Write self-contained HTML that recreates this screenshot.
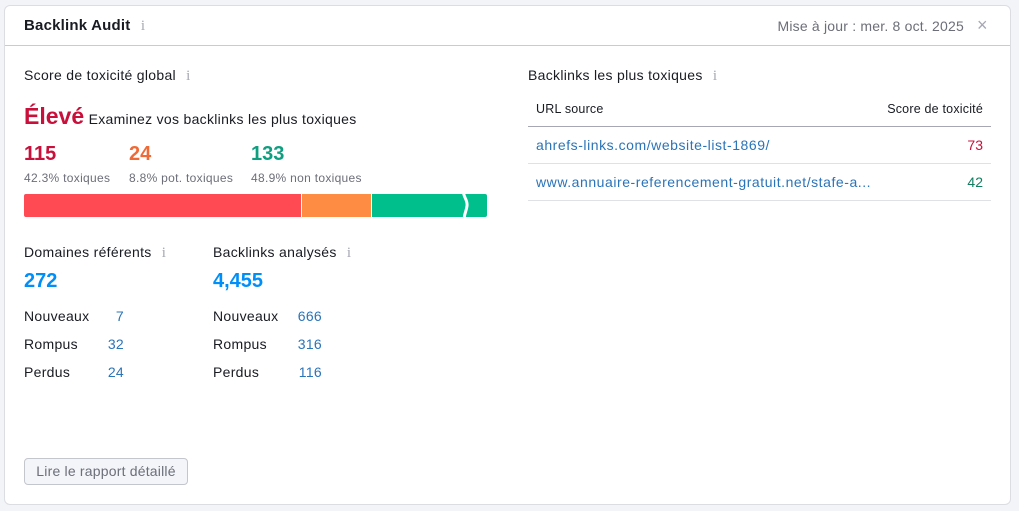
<!DOCTYPE html>
<html><head><meta charset="utf-8"><style>
*{margin:0;padding:0;box-sizing:border-box}
body{width:1019px;height:511px;background:#f3f4f8;font-family:"Liberation Sans",sans-serif;color:#191b23;position:relative;overflow:hidden}
.card{position:absolute;left:4px;top:5px;width:1007px;height:500px;background:#fff;border:1px solid #dcdde3;border-radius:6px}
.a{position:absolute;white-space:nowrap}
.i{color:#a5a8b3;font-family:"Liberation Serif",serif;font-size:15px}
.blue{color:#2a74b8}
.big{font-weight:bold;font-size:20px}
.t{font-size:14px;letter-spacing:0.3px}
</style></head><body>
<div class="card"></div>
<div class="a" style="left:24px;top:17px;font-size:15px;font-weight:bold;letter-spacing:0.2px">Backlink Audit <span class="i" style="margin-left:6px;font-weight:normal">i</span></div>
<div class="a" style="right:55px;top:18px;font-size:14px;color:#6c6e79;letter-spacing:0.2px">Mise à jour : mer. 8 oct. 2025</div>
<div class="a" style="left:977px;top:15px;font-size:18px;color:#a5a8b3">×</div>
<div class="a" style="left:5px;top:45px;width:1005px;height:1px;background:#c9cbd2"></div>

<div class="a t" style="left:24px;top:67px">Score de toxicité global <span class="i" style="margin-left:6px">i</span></div>
<div class="a" style="left:24px;top:103px"><span style="color:#c8103b;font-weight:bold;font-size:23px">Élevé</span> <span class="t">Examinez vos backlinks les plus toxiques</span></div>
<div class="a big" style="left:24px;top:143px;color:#c8103b">115</div>
<div class="a big" style="left:129px;top:143px;color:#f06a37">24</div>
<div class="a big" style="left:251px;top:143px;color:#0e9e80">133</div>
<div class="a" style="left:24px;top:171px;font-size:12px;color:#6c6e79;letter-spacing:0.3px">42.3% toxiques</div>
<div class="a" style="left:129px;top:171px;font-size:12px;color:#6c6e79;letter-spacing:0.3px">8.8% pot. toxiques</div>
<div class="a" style="left:251px;top:171px;font-size:12px;color:#6c6e79;letter-spacing:0.3px">48.9% non toxiques</div>
<div class="a" style="left:24px;top:194px;width:277px;height:23px;background:#ff4953;border-radius:2px 0 0 2px"></div>
<div class="a" style="left:302px;top:194px;width:69px;height:23px;background:#ff8c43"></div>
<div class="a" style="left:372px;top:194px;width:115px;height:23px;background:#00bf8c;border-radius:0 2px 2px 0"></div>
<svg class="a" style="left:458px;top:189px" width="16" height="34"><path d="M6 0 C4 8,10 10,9 17 C8 24,5 26,7 34" stroke="#fff" stroke-width="3" fill="none"/></svg>

<div class="a t" style="left:24px;top:244px">Domaines référents <span class="i" style="margin-left:6px">i</span></div>
<div class="a t" style="left:213px;top:244px">Backlinks analysés <span class="i" style="margin-left:6px">i</span></div>
<div class="a" style="left:24px;top:270px;font-size:20px;font-weight:bold;color:#008ff8">272</div>
<div class="a" style="left:213px;top:270px;font-size:20px;font-weight:bold;color:#008ff8">4,455</div>
<div class="a t" style="left:24px;top:302px;line-height:28px">Nouveaux<br>Rompus<br>Perdus</div>
<div class="a blue t" style="left:94px;top:302px;width:30px;text-align:right;line-height:28px">7<br>32<br>24</div>
<div class="a t" style="left:213px;top:302px;line-height:28px">Nouveaux<br>Rompus<br>Perdus</div>
<div class="a blue t" style="left:287px;top:302px;width:35px;text-align:right;line-height:28px">666<br>316<br>116</div>
<div class="a" style="left:24px;top:458px;width:164px;height:27px;border:1px solid #c4c6cd;border-radius:4px;background:#f4f5f9;color:#6c6e79;font-size:14px;line-height:25px;text-align:center;letter-spacing:0.2px">Lire le rapport détaillé</div>

<div class="a t" style="left:528px;top:67px">Backlinks les plus toxiques <span class="i" style="margin-left:6px">i</span></div>
<div class="a" style="left:536px;top:102px;font-size:12.5px;letter-spacing:0.2px">URL source</div>
<div class="a" style="right:36px;top:102px;font-size:12.5px;letter-spacing:0.2px">Score de toxicité</div>
<div class="a" style="left:528px;top:126px;width:463px;height:1px;background:#a5a8b3"></div>
<div class="a blue" style="left:536px;top:137px;font-size:14px;letter-spacing:0.55px">ahrefs-links.com/website-list-1869/</div>
<div class="a" style="right:36px;top:137px;font-size:14px;color:#c8103b">73</div>
<div class="a" style="left:528px;top:163px;width:463px;height:1px;background:#e0e1e6"></div>
<div class="a blue" style="left:536px;top:174px;font-size:14px;letter-spacing:0.55px">www.annuaire-referencement-gratuit.net/stafe-a...</div>
<div class="a" style="right:36px;top:174px;font-size:14px;color:#0e8060">42</div>
<div class="a" style="left:528px;top:200px;width:463px;height:1px;background:#e0e1e6"></div>
</body></html>
